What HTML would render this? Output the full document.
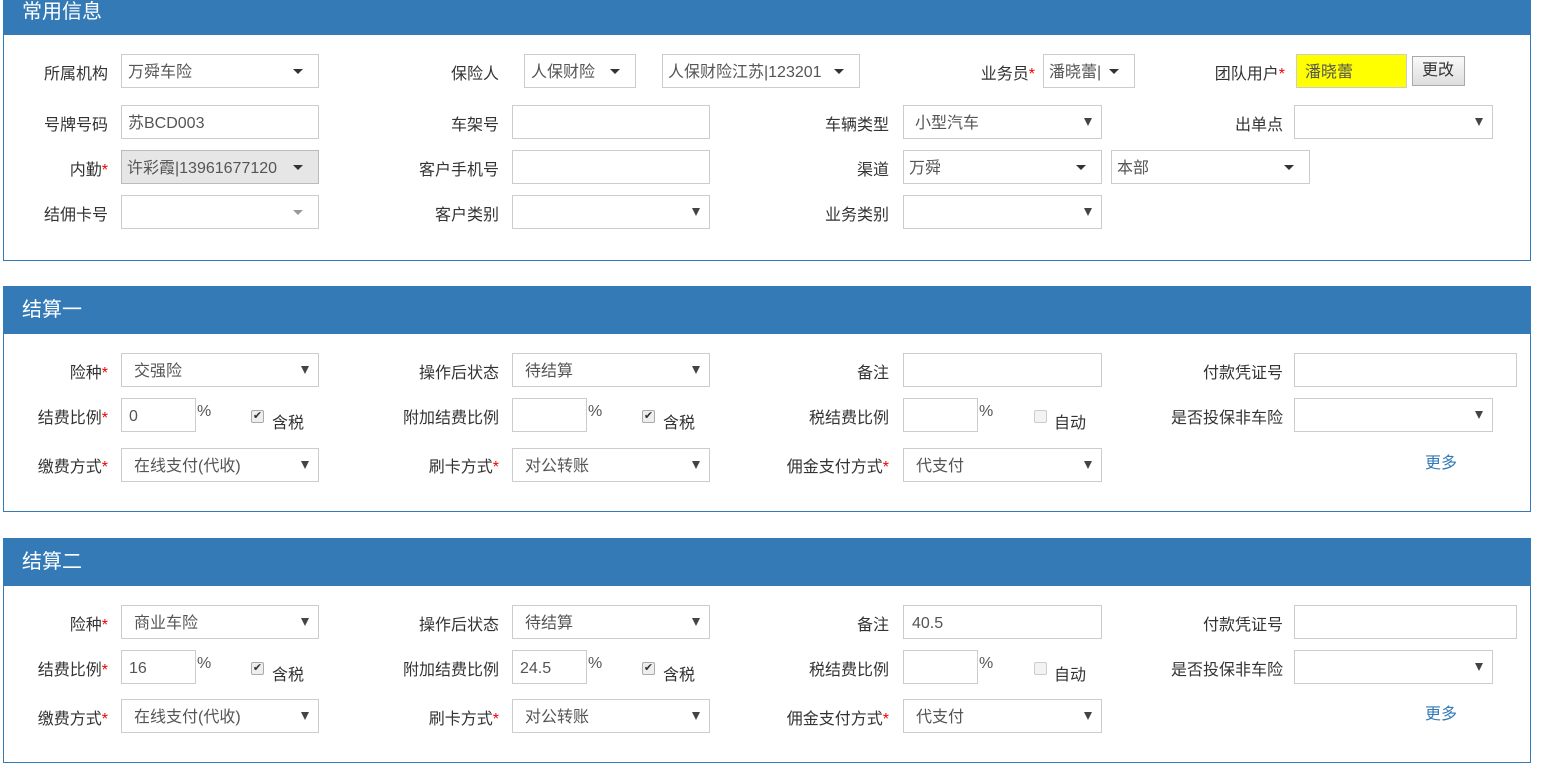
<!DOCTYPE html>
<html><head><meta charset="utf-8"><style>
*{box-sizing:border-box;margin:0;padding:0}
body{width:1543px;height:773px;background:#fff;position:relative;overflow:hidden;font-family:"Liberation Sans","Noto Sans CJK SC",sans-serif;font-size:16px;color:#333}
.p{position:absolute;left:3px;width:1528px;border:1px solid #337ab7;background:#fff}
.h{position:absolute;left:3px;width:1528px;background:#337ab7;color:#fff;font-size:20px;padding-left:19px}
.l{position:absolute;text-align:right;line-height:20px;color:#333;white-space:nowrap}
.l i{color:#e00;font-style:normal}
.i{position:absolute;height:34px;border:1px solid #ccc;background:#fff;padding-left:6px;padding-top:2px;line-height:32px;color:#555;white-space:nowrap;overflow:hidden}
.s::after{content:"";position:absolute;right:15px;top:14px;border-left:5px solid transparent;border-right:5px solid transparent;border-top:5px solid #333}
.g::after{border-top-color:#999}
.n::after{content:"";position:absolute;right:9px;top:12px;border-left:4px solid transparent;border-right:4px solid transparent;border-top:8px solid #444}
.pc{position:absolute;color:#555}
.cb{position:absolute;width:13px;height:13px;border:1px solid #aaa;border-radius:2px;background:#eee;font-size:11px;line-height:11px;text-align:center;color:#333}
.t{position:absolute;color:#333}
</style></head><body>

<div class="p" style="top:0;height:261px"></div>
<div class="h" style="top:0;height:35px;line-height:24px">常用信息</div>

<div class="l" style="left:20px;width:88px;top:65px">所属机构</div>
<div class="i s" style="left:121px;top:54px;width:198px">万舜车险</div>
<div class="l" style="left:400px;width:99px;top:65px">保险人</div>
<div class="i s" style="left:524px;top:54px;width:112px">人保财险</div>
<div class="i s" style="left:662px;top:54px;width:198px;padding-left:5px">人保财险江苏|123201</div>
<div class="l" style="left:900px;width:135px;top:65px">业务员<i>*</i></div>
<div class="i s" style="left:1043px;top:54px;width:92px;padding-left:5px">潘晓蕾|</div>
<div class="l" style="left:1180px;width:105px;top:65px">团队用户<i>*</i></div>
<div class="i" style="left:1296px;top:54px;width:111px;background:#ff0;padding-left:8px">潘晓蕾</div>
<div class="i" style="left:1412px;top:56px;width:53px;height:30px;line-height:27px;background:linear-gradient(#fafafa,#ddd);border-color:#aaa;color:#333;padding-left:9px;padding-top:0">更改</div>

<div class="l" style="left:20px;width:88px;top:116px">号牌号码</div>
<div class="i" style="left:121px;top:105px;width:198px">苏BCD003</div>
<div class="l" style="left:400px;width:99px;top:116px">车架号</div>
<div class="i" style="left:512px;top:105px;width:198px"></div>
<div class="l" style="left:780px;width:109px;top:116px">车辆类型</div>
<div class="i n" style="left:903px;top:105px;width:199px;padding-left:11px">小型汽车</div>
<div class="l" style="left:1180px;width:103px;top:116px">出单点</div>
<div class="i n" style="left:1294px;top:105px;width:199px"></div>

<div class="l" style="left:20px;width:88px;top:161px">内勤<i>*</i></div>
<div class="i s" style="left:121px;top:150px;width:198px;background:#e6e6e6;border-color:#bbb;padding-left:5px">许彩霞|13961677120</div>
<div class="l" style="left:400px;width:99px;top:161px">客户手机号</div>
<div class="i" style="left:512px;top:150px;width:198px"></div>
<div class="l" style="left:780px;width:109px;top:161px">渠道</div>
<div class="i s" style="left:903px;top:150px;width:199px;padding-left:5px">万舜</div>
<div class="i s" style="left:1111px;top:150px;width:199px;padding-left:5px">本部</div>

<div class="l" style="left:20px;width:88px;top:206px">结佣卡号</div>
<div class="i s g" style="left:121px;top:195px;width:198px"></div>
<div class="l" style="left:400px;width:99px;top:206px">客户类别</div>
<div class="i n" style="left:512px;top:195px;width:198px"></div>
<div class="l" style="left:780px;width:109px;top:206px">业务类别</div>
<div class="i n" style="left:903px;top:195px;width:199px"></div>

<!-- panel 2 -->
<div class="p" style="top:286px;height:226px"></div>
<div class="h" style="top:286px;height:48px;line-height:48px">结算一</div>

<div class="l" style="left:20px;width:88px;top:364px">险种<i>*</i></div>
<div class="i n" style="left:121px;top:353px;width:198px;padding-left:12px">交强险</div>
<div class="l" style="left:380px;width:119px;top:364px">操作后状态</div>
<div class="i n" style="left:512px;top:353px;width:198px;padding-left:12px">待结算</div>
<div class="l" style="left:780px;width:109px;top:364px">备注</div>
<div class="i" style="left:903px;top:353px;width:199px"></div>
<div class="l" style="left:1150px;width:133px;top:364px">付款凭证号</div>
<div class="i" style="left:1294px;top:353px;width:223px"></div>

<div class="l" style="left:20px;width:88px;top:409px">结费比例<i>*</i></div>
<div class="i" style="left:121px;top:398px;width:75px;padding-left:7px">0</div>
<div class="pc" style="left:197px;top:403px">%</div>
<div class="cb" style="left:251px;top:410px">✔</div>
<div class="t" style="left:272px;top:409px">含税</div>
<div class="l" style="left:380px;width:119px;top:409px">附加结费比例</div>
<div class="i" style="left:512px;top:398px;width:75px"></div>
<div class="pc" style="left:588px;top:403px">%</div>
<div class="cb" style="left:642px;top:410px">✔</div>
<div class="t" style="left:663px;top:409px">含税</div>
<div class="l" style="left:780px;width:109px;top:409px">税结费比例</div>
<div class="i" style="left:903px;top:398px;width:75px"></div>
<div class="pc" style="left:979px;top:403px">%</div>
<div class="cb" style="left:1034px;top:410px;background:#f3f3f3;border-color:#ccc"></div>
<div class="t" style="left:1054px;top:409px">自动</div>
<div class="l" style="left:1150px;width:133px;top:409px">是否投保非车险</div>
<div class="i n" style="left:1294px;top:398px;width:199px"></div>

<div class="l" style="left:20px;width:88px;top:458px">缴费方式<i>*</i></div>
<div class="i n" style="left:121px;top:448px;width:198px;padding-left:12px">在线支付(代收)</div>
<div class="l" style="left:380px;width:119px;top:458px">刷卡方式<i>*</i></div>
<div class="i n" style="left:512px;top:448px;width:198px;padding-left:12px">对公转账</div>
<div class="l" style="left:760px;width:129px;top:458px">佣金支付方式<i>*</i></div>
<div class="i n" style="left:903px;top:448px;width:199px;padding-left:12px">代支付</div>
<div class="t" style="left:1425px;top:449px;color:#337ab7">更多</div>

<!-- panel 3 -->
<div class="p" style="top:538px;height:225px"></div>
<div class="h" style="top:538px;height:48px;line-height:48px">结算二</div>

<div class="l" style="left:20px;width:88px;top:616px">险种<i>*</i></div>
<div class="i n" style="left:121px;top:605px;width:198px;padding-left:12px">商业车险</div>
<div class="l" style="left:380px;width:119px;top:616px">操作后状态</div>
<div class="i n" style="left:512px;top:605px;width:198px;padding-left:12px">待结算</div>
<div class="l" style="left:780px;width:109px;top:616px">备注</div>
<div class="i" style="left:903px;top:605px;width:199px;padding-left:8px">40.5</div>
<div class="l" style="left:1150px;width:133px;top:616px">付款凭证号</div>
<div class="i" style="left:1294px;top:605px;width:223px"></div>

<div class="l" style="left:20px;width:88px;top:661px">结费比例<i>*</i></div>
<div class="i" style="left:121px;top:650px;width:75px;padding-left:7px">16</div>
<div class="pc" style="left:197px;top:655px">%</div>
<div class="cb" style="left:251px;top:662px">✔</div>
<div class="t" style="left:272px;top:661px">含税</div>
<div class="l" style="left:380px;width:119px;top:661px">附加结费比例</div>
<div class="i" style="left:512px;top:650px;width:75px;padding-left:7px">24.5</div>
<div class="pc" style="left:588px;top:655px">%</div>
<div class="cb" style="left:642px;top:662px">✔</div>
<div class="t" style="left:663px;top:661px">含税</div>
<div class="l" style="left:780px;width:109px;top:661px">税结费比例</div>
<div class="i" style="left:903px;top:650px;width:75px"></div>
<div class="pc" style="left:979px;top:655px">%</div>
<div class="cb" style="left:1034px;top:662px;background:#f3f3f3;border-color:#ccc"></div>
<div class="t" style="left:1054px;top:661px">自动</div>
<div class="l" style="left:1150px;width:133px;top:661px">是否投保非车险</div>
<div class="i n" style="left:1294px;top:650px;width:199px"></div>

<div class="l" style="left:20px;width:88px;top:710px">缴费方式<i>*</i></div>
<div class="i n" style="left:121px;top:699px;width:198px;padding-left:12px">在线支付(代收)</div>
<div class="l" style="left:380px;width:119px;top:710px">刷卡方式<i>*</i></div>
<div class="i n" style="left:512px;top:699px;width:198px;padding-left:12px">对公转账</div>
<div class="l" style="left:760px;width:129px;top:710px">佣金支付方式<i>*</i></div>
<div class="i n" style="left:903px;top:699px;width:199px;padding-left:12px">代支付</div>
<div class="t" style="left:1425px;top:700px;color:#337ab7">更多</div>

</body></html>
